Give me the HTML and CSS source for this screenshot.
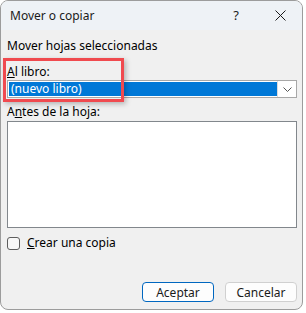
FILE: index.html
```html
<!DOCTYPE html>
<html lang="es">
<head>
    <meta charset="UTF-8">
    <title>Mover o copiar</title>
    <link rel="stylesheet" href="styles.css">
</head>
<body>
    <div class="window">
        <div class="titlebar">
            <span class="title">Mover o copiar</span>
            <span class="help">?</span>
            <svg class="close" width="11" height="11" viewBox="0 0 11 11">
                <path d="M0.5 0.5 L10.5 10.5 M10.5 0.5 L0.5 10.5" stroke="#1a1a1a" stroke-width="1" fill="none"/>
            </svg>
        </div>

        <div class="content">
            <div class="label first">Mover hojas seleccionadas</div>

            <div class="label"><u>A</u>l libro:</div>
            <div class="select">
                <div class="select-value">(nuevo libro)</div>
                <div class="select-arrow">
                    <svg width="9" height="5" viewBox="0 0 9 5">
                        <path d="M0.5 0.5 L4.5 4.5 L8.5 0.5" stroke="#555" stroke-width="1" fill="none"/>
                    </svg>
                </div>
            </div>

            <div class="label">A<u>n</u>tes de la hoja:</div>
            <div class="listbox"></div>

            <label class="check-row">
                <span class="checkbox"></span>
                <span><u>C</u>rear una copia</span>
            </label>

            <div class="buttons">
                <button class="btn primary">Aceptar</button>
                <button class="btn">Cancelar</button>
            </div>
        </div>

        <!-- annotation box -->
        <div class="highlight"></div>
    </div>
</body>
</html>
```

FILE: styles.css
```css
body {
    margin: 0;
    background-color: #ffffff;
    font-family: "Noto Sans", "Open Sans", sans-serif;
    font-size: 12px;
    color: #000000;
}

.window {
    position: relative;
    width: 303px;
    height: 310px;
    box-sizing: border-box;
    border: 1px solid #9c9c9c;
    border-radius: 8px;
    background-color: #f0f0f0;
    overflow: hidden;
    display: flex;
    flex-direction: column;
}

.titlebar {
    height: 29px;
    background-color: #eef2f6;
    display: flex;
    align-items: center;
    padding-left: 9px;
    padding-right: 16px;
    padding-bottom: 1px;
    box-sizing: border-box;
}

.title {
    flex: 1;
    color: #1a1a1a;
}

.help {
    margin-right: 36px;
    font-size: 13px;
    color: #1a1a1a;
}

.close {
    display: block;
}

.content {
    flex: 1;
    display: flex;
    flex-direction: column;
    padding: 0 5px 0 6px;
}

.label {
    line-height: 16px;
    height: 16px;
    white-space: nowrap;
}

.label.first {
    margin-top: 8px;
    margin-bottom: 10px;
}

.select {
    height: 18px;
    box-sizing: border-box;
    border: 1px solid #a8a8a8;
    background-color: #ffffff;
    display: flex;
    margin-bottom: 6px;
}

.select-value {
    flex: 1;
    margin: 1px 0 1px 1px;
    background-color: #0078d7;
    color: #ffffff;
    line-height: 14px;
    padding-left: 2px;
}

.select-arrow {
    width: 18px;
    border-left: 1px solid #dcdcdc;
    display: flex;
    align-items: center;
    justify-content: center;
}

.listbox {
    height: 107px;
    box-sizing: border-box;
    border: 1px solid #82878c;
    background-color: #ffffff;
    margin-top: 1px;
}

.check-row {
    display: flex;
    align-items: center;
    gap: 7px;
    margin-top: 7px;
    line-height: 16px;
}

.checkbox {
    width: 13px;
    height: 13px;
    box-sizing: border-box;
    border: 1px solid #5d5d5d;
    border-radius: 3px;
    background-color: #f7f7f7;
}

.buttons {
    margin-top: auto;
    margin-bottom: 7px;
    display: flex;
    justify-content: flex-end;
    gap: 11px;
}

.btn {
    width: 72px;
    height: 20px;
    box-sizing: border-box;
    border: 1px solid #d0d0d0;
    border-radius: 4px;
    background-color: #fdfdfd;
    font-family: inherit;
    font-size: 12px;
    color: #1a1a1a;
    padding: 0;
}

.btn.primary {
    border-color: #0067c0;
}

.highlight {
    position: absolute;
    left: 2px;
    top: 57px;
    width: 121px;
    height: 44px;
    box-sizing: border-box;
    border: 3px solid #f04a4f;
    box-shadow: 2px 2px 5px rgba(0, 0, 0, 0.25);
}
```
